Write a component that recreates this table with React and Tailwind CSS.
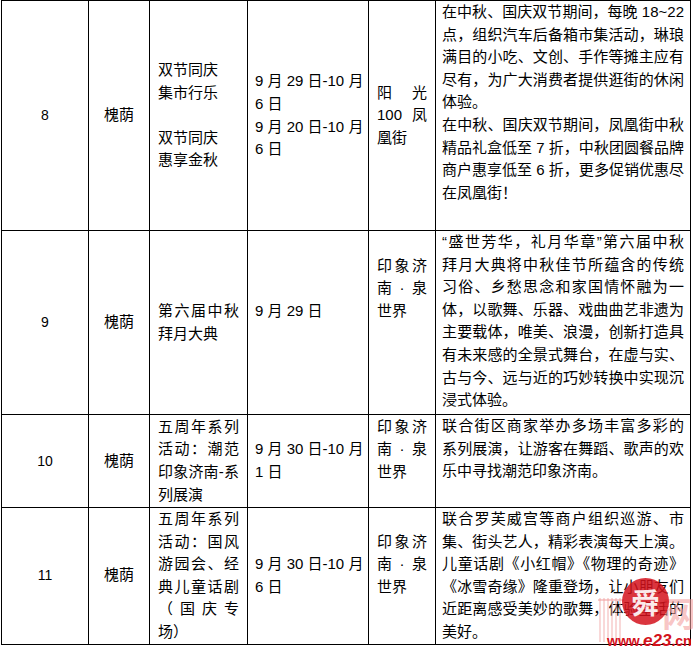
import React from 'react';

const rows = [
    {
        no: '8',
        h: 'h-[230px]',
        name: [['双节同庆'], ['集市行乐'], [''], ['双节同庆'], ['惠享金秋']],
        date: [['9 月 29 日-10 月', 1], ['6 日'], ['9 月 20 日-10 月', 1], ['6 日']],
        place: [['阳光', 1], ['100 凤', 1], ['凰街']],
        desc: [
            ['在中秋、国庆双节期间，每晚 18~22', 1],
            ['点，组织汽车后备箱市集活动，琳琅', 1],
            ['满目的小吃、文创、手作等摊主应有', 1],
            ['尽有，为广大消费者提供逛街的休闲', 1],
            ['体验。'],
            ['在中秋、国庆双节期间，凤凰街中秋', 1],
            ['精品礼盒低至 7 折，中秋团圆餐品牌', 1],
            ['商户惠享低至 6 折，更多促销优惠尽', 1],
            ['在凤凰街！'],
        ],
    },
    {
        no: '9',
        h: 'h-[184px]',
        name: [['第六届中秋', 1], ['拜月大典']],
        date: [['9 月 29 日'], ['']],
        place: [['印象济', 1], ['南·泉', 1], ['世界'], [''], [''], ['']],
        desc: [
            ['“盛世芳华，礼月华章”第六届中秋', 1],
            ['拜月大典将中秋佳节所蕴含的传统', 1],
            ['习俗、乡愁思念和家国情怀融为一', 1],
            ['体，以歌舞、乐器、戏曲曲艺非遗为', 1],
            ['主要载体，唯美、浪漫，创新打造具', 1],
            ['有未来感的全景式舞台，在虚与实、', 1],
            ['古与今、远与近的巧妙转换中实现沉', 1],
            ['浸式体验。'],
        ],
    },
    {
        no: '10',
        h: 'h-[93px]',
        name: [['五周年系列', 1], ['活动：潮范', 1], ['印象济南-系', 1], ['列展演']],
        date: [['9 月 30 日-10 月', 1], ['1 日']],
        place: [['印象济', 1], ['南·泉', 1], ['世界'], ['']],
        desc: [
            ['联合街区商家举办多场丰富多彩的', 1],
            ['系列展演，让游客在舞蹈、歌声的欢', 1],
            ['乐中寻找潮范印象济南。'],
        ],
    },
    {
        no: '11',
        h: 'h-[135px]',
        name: [['五周年系列', 1], ['活动：国风', 1], ['游园会、经', 1], ['典儿童话剧', 1], ['（国庆专', 1], ['场）']],
        date: [['9 月 30 日-10 月', 1], ['6 日']],
        place: [['印象济', 1], ['南·泉', 1], ['世界'], ['']],
        desc: [
            ['联合罗芙威宫等商户组织巡游、市', 1],
            ['集、街头艺人，精彩表演每天上演。', 1],
            ['儿童话剧《小红帽》《物理的奇迹》', 1],
            ['《冰雪奇缘》隆重登场，让小朋友们', 1],
            ['近距离感受美妙的歌舞，体验童话的', 1],
            ['美好。'],
        ],
    },
];

const Lines = ({ lines }) => (
    <div>
        {lines.map(([t, j], i) => (
            <div key={i} className={j ? 'whitespace-nowrap h-[22.6px] [text-align-last:justify] text-justify' : 'whitespace-nowrap h-[22.6px]'}>
                {t}
            </div>
        ))}
    </div>
);

const App = () => {
    return (
        <div className="relative w-[693px] h-[646px] overflow-hidden bg-white text-black font-['Liberation_Sans','Noto_Sans_CJK_SC',sans-serif] text-[15px] leading-[22.6px]">
            <div className="pl-[1px]">
                <table className="border-collapse table-fixed w-[689px]">
                    <colgroup>
                        <col className="w-[87px]" />
                        <col className="w-[61px]" />
                        <col className="w-[98px]" />
                        <col className="w-[121px]" />
                        <col className="w-[67px]" />
                        <col className="w-[255px]" />
                    </colgroup>
                    <tbody>
                        {rows.map(r => (
                            <tr key={r.no} className={r.h}>
                                <td className="border border-black text-center align-middle text-[14px] p-0">{r.no}</td>
                                <td className="border border-black text-center align-middle p-0">槐荫</td>
                                <td className="border border-black align-middle px-[8px] py-0"><Lines lines={r.name} /></td>
                                <td className="border border-black align-middle pl-[7px] pr-[9px] py-0"><Lines lines={r.date} /></td>
                                <td className="border border-black align-middle px-[8px] py-0"><Lines lines={r.place} /></td>
                                <td className="border border-black align-top px-[6px] py-0"><Lines lines={r.desc} /></td>
                            </tr>
                        ))}
                    </tbody>
                </table>
            </div>

            {/* watermark */}
            <div className="absolute left-[598px] top-[576px] w-[95px] h-[70px] pointer-events-none">
                <svg className="absolute left-0 top-[22px]" width="26" height="44" viewBox="0 0 26 44">
                    {[2, 6, 10, 14, 18, 22].map(x => (
                        <line key={x} x1={x} y1="0" x2={x} y2="44" stroke="#f2a3a3" strokeWidth="1.5" opacity="0.55" />
                    ))}
                    <line x1="0" y1="2" x2="26" y2="2" stroke="#f2a3a3" strokeWidth="2" opacity="0.55" />
                </svg>
                <div className="absolute left-[64px] top-[20px] text-[34px] leading-none font-bold text-[#f4a0a0]/60 font-['Noto_Sans_CJK_SC',sans-serif]">网</div>
                <div className="absolute left-[24px] top-[2px] w-[47px] h-[47px] rounded-full bg-[#d3121c]/85 flex items-center justify-center">
                    <span className="text-white/90 text-[28px] font-bold leading-none font-['Noto_Sans_CJK_SC',sans-serif]">舜</span>
                </div>
                <div className="absolute left-[9px] top-[56px] text-[14px] leading-none font-bold text-[#d3121c] font-['Liberation_Sans',sans-serif] whitespace-nowrap">
                    www.<span className="italic text-[17px]">e23</span>.cn
                </div>
            </div>
        </div>
    );
};

export default App;
